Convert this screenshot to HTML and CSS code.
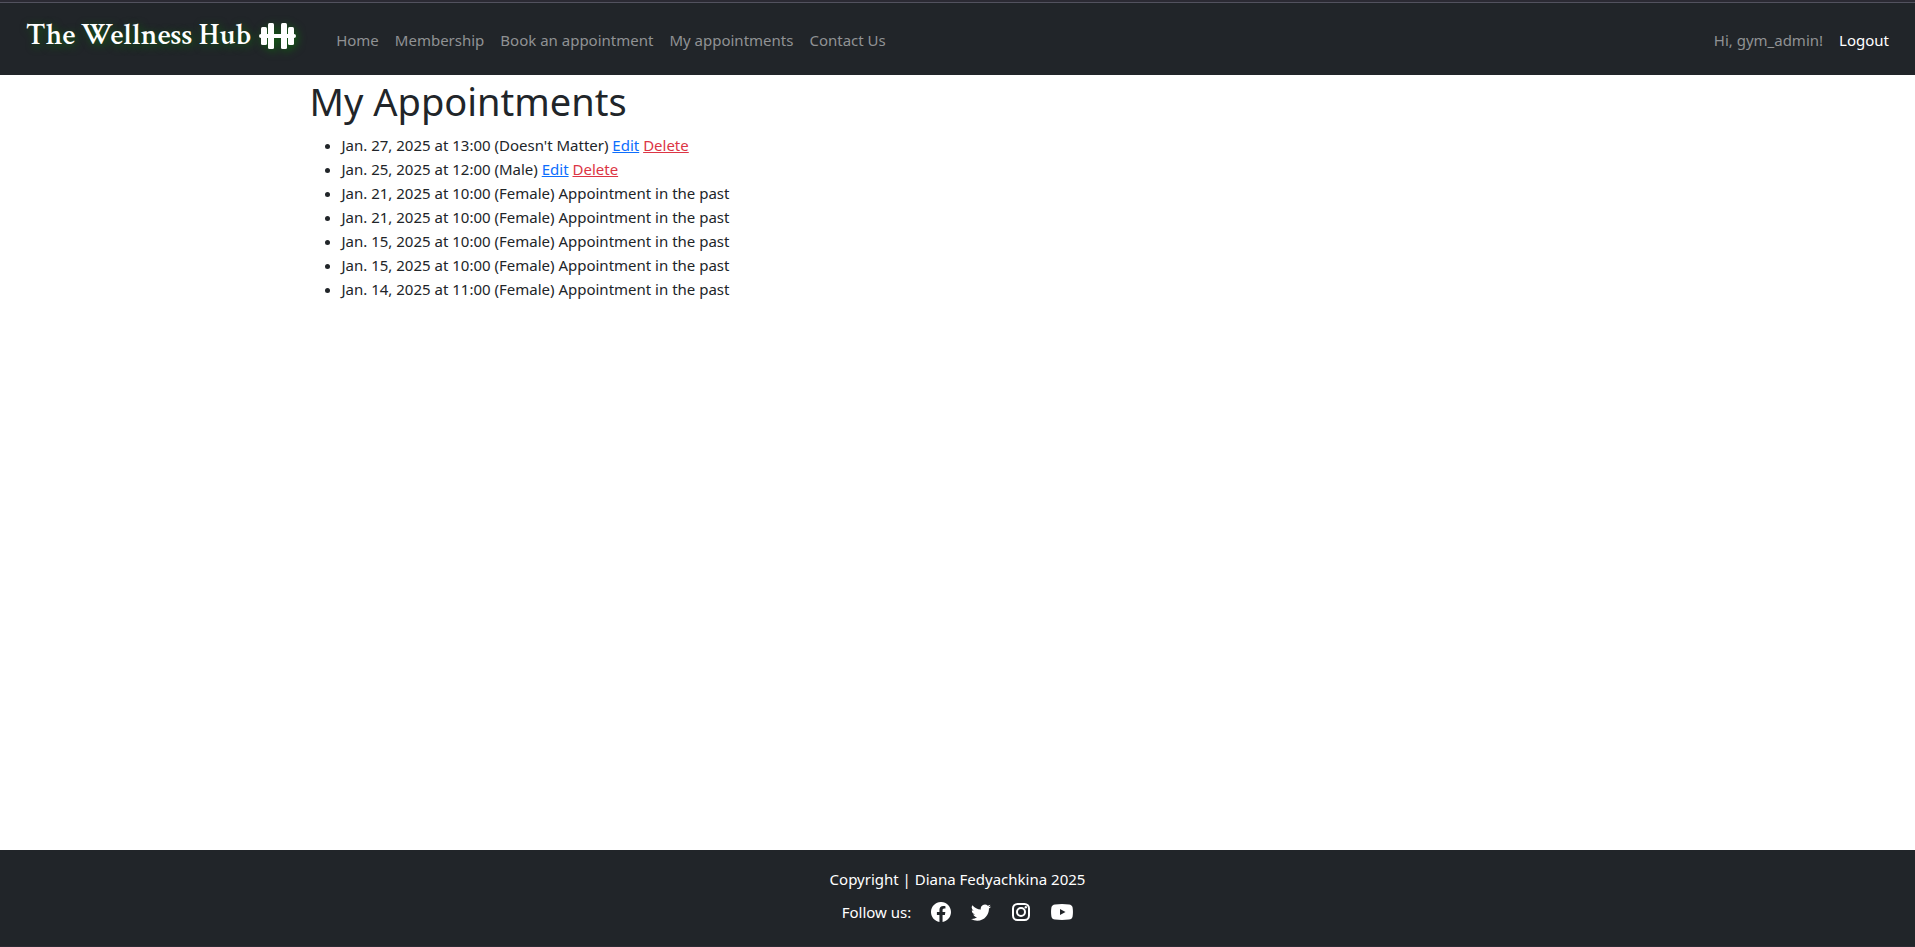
FILE: index.html
```html
<!DOCTYPE html>
<html lang="en">
<head>
<meta charset="utf-8">
<meta name="viewport" content="width=device-width, initial-scale=1">
<title>The Wellness Hub - My Appointments</title>
<link rel="stylesheet" href="styles.css">
</head>
<body>
<header class="navbar">
  <a class="brand" href="#">The Wellness Hub
    <svg class="brand-icon" viewBox="0 0 37 26" aria-hidden="true">
      <rect x="0" y="11" width="37" height="4" rx="2"/>
      <rect x="2" y="4" width="6" height="18" rx="1.500"/>
      <rect x="9" y="0" width="6" height="26" rx="1.500"/>
      <rect x="22" y="0" width="6" height="26" rx="1.500"/>
      <rect x="29" y="4" width="6" height="18" rx="1.500"/>
    </svg>
  </a>
  <nav class="nav-links">
    <a href="#">Home</a>
    <a href="#">Membership</a>
    <a href="#">Book an appointment</a>
    <a href="#">My appointments</a>
    <a href="#">Contact Us</a>
  </nav>
  <div class="account">
    <span>Hi, gym_admin!</span>
    <a href="#">Logout</a>
  </div>
</header>
<main class="container">
  <h1>My Appointments</h1>
  <ul class="appointments">
    <li>Jan. 27, 2025 at 13:00 (Doesn't Matter) <a class="edit" href="#">Edit</a> <a class="delete" href="#">Delete</a></li>
    <li>Jan. 25, 2025 at 12:00 (Male) <a class="edit" href="#">Edit</a> <a class="delete" href="#">Delete</a></li>
    <li>Jan. 21, 2025 at 10:00 (Female) Appointment in the past</li>
    <li>Jan. 21, 2025 at 10:00 (Female) Appointment in the past</li>
    <li>Jan. 15, 2025 at 10:00 (Female) Appointment in the past</li>
    <li>Jan. 15, 2025 at 10:00 (Female) Appointment in the past</li>
    <li>Jan. 14, 2025 at 11:00 (Female) Appointment in the past</li>
  </ul>
</main>
<footer class="footer">
  <p>Copyright | Diana Fedyachkina 2025</p>
  <div class="social">
    <span>Follow us:</span>
    <a href="#" aria-label="Facebook"><svg viewBox="0 0 16 16"><path d="M16 8.049c0-4.446-3.582-8.05-8-8.05C3.58 0-.002 3.603-.002 8.05c0 4.017 2.926 7.347 6.75 7.951v-5.625h-2.03V8.05H6.75V6.275c0-2.017 1.195-3.131 3.022-3.131.876 0 1.791.157 1.791.157v1.98h-1.009c-.993 0-1.303.621-1.303 1.258v1.51h2.218l-.354 2.326H9.25V16c3.824-.604 6.75-3.934 6.75-7.951z"/></svg></a>
    <a href="#" aria-label="Twitter"><svg viewBox="0 0 16 16"><path d="M5.026 15c6.038 0 9.341-5.003 9.341-9.334 0-.14 0-.282-.006-.422A6.685 6.685 0 0 0 16 3.542a6.658 6.658 0 0 1-1.889.518 3.301 3.301 0 0 0 1.447-1.817 6.533 6.533 0 0 1-2.087.793A3.286 3.286 0 0 0 7.875 6.03a9.325 9.325 0 0 1-6.767-3.429 3.289 3.289 0 0 0 1.018 4.382A3.323 3.323 0 0 1 .64 6.575v.045a3.288 3.288 0 0 0 2.632 3.218 3.203 3.203 0 0 1-.865.115 3.23 3.23 0 0 1-.614-.057 3.283 3.283 0 0 0 3.067 2.277A6.588 6.588 0 0 1 .78 13.58a6.32 6.32 0 0 1-.78-.045A9.344 9.344 0 0 0 5.026 15z"/></svg></a>
    <a href="#" aria-label="Instagram"><svg viewBox="0 0 20 20"><rect x="2" y="2" width="16" height="16" rx="4.500" fill="none" stroke="currentColor" stroke-width="2"/><circle cx="10" cy="10" r="4" fill="none" stroke="currentColor" stroke-width="2"/><circle cx="14.800" cy="5.200" r="1.200"/></svg></a>
    <a href="#" aria-label="YouTube"><svg class="wide" viewBox="0 0 22 16"><path fill-rule="evenodd" d="M4 .4Q11-.4 18 .4Q21 .6 21.600 3.500Q22.300 8 21.600 12.500Q21 15.400 18 15.600Q11 16.400 4 15.600Q1 15.400 .4 12.500Q-.3 8 .4 3.500Q1 .6 4 .4ZM9 5V11L14.500 8Z"/></svg></a>
  </div>
</footer>
</body>
</html>
```
FILE: styles.css
```css
* { box-sizing: border-box; }

body {
  margin: 0;
  min-height: 100vh;
  display: flex;
  flex-direction: column;
  background: #fff;
  color: #212529;
  font-family: "Segoe UI", "Noto Sans", sans-serif;
  font-size: 15px;
  line-height: 24px;
}

a { color: inherit; text-decoration: none; }
svg { display: block; fill: currentColor; }

.navbar {
  display: flex;
  align-items: center;
  min-height: 75px;
  padding: 2px 26px 0;
  border-top: 2px solid #2b2a33;
  background: #212529;
  box-shadow: inset 0 1px #52525e;
}

.brand {
  display: flex;
  align-items: center;
  gap: 8px;
  margin: 0 40px 8px 0;
  color: #fff;
  font-family: "Crimson Text", "Liberation Serif", serif;
  font-size: 30px;
  font-weight: 600;
  line-height: 36px;
  text-shadow: 2px 2px 8px #106010;
}
.brand-icon { width: 37px; height: 26px; filter: drop-shadow(2px 2px 4px #106010); }

.nav-links, .account { display: flex; gap: 16px; color: #909294; }
.account { margin-left: auto; }
.account a { color: #fff; }

.container {
  width: 100%;
  max-width: 1320px;
  margin: 0 auto;
  padding: 0 12px;
  flex: 1;
}

h1 { margin: 2px 0 8px; font-size: 38px; font-weight: 400; line-height: 48px; }

.appointments { margin: 0; padding-left: 32px; }
.edit { color: #0d6efd; text-decoration: underline; }
.delete { color: #dc3545; text-decoration: underline; }

.footer {
  display: flex;
  flex-direction: column;
  align-items: center;
  gap: 9px;
  padding: 17px 16px 22px;
  border-bottom: 1px solid #2b2a33;
  background: #212529;
  color: #fff;
}
.footer p { margin: 0; }
.social { display: flex; align-items: center; gap: 20px; }
.social svg { width: 20px; height: 20px; }
.social .wide { width: 22px; height: 16px; }
```
